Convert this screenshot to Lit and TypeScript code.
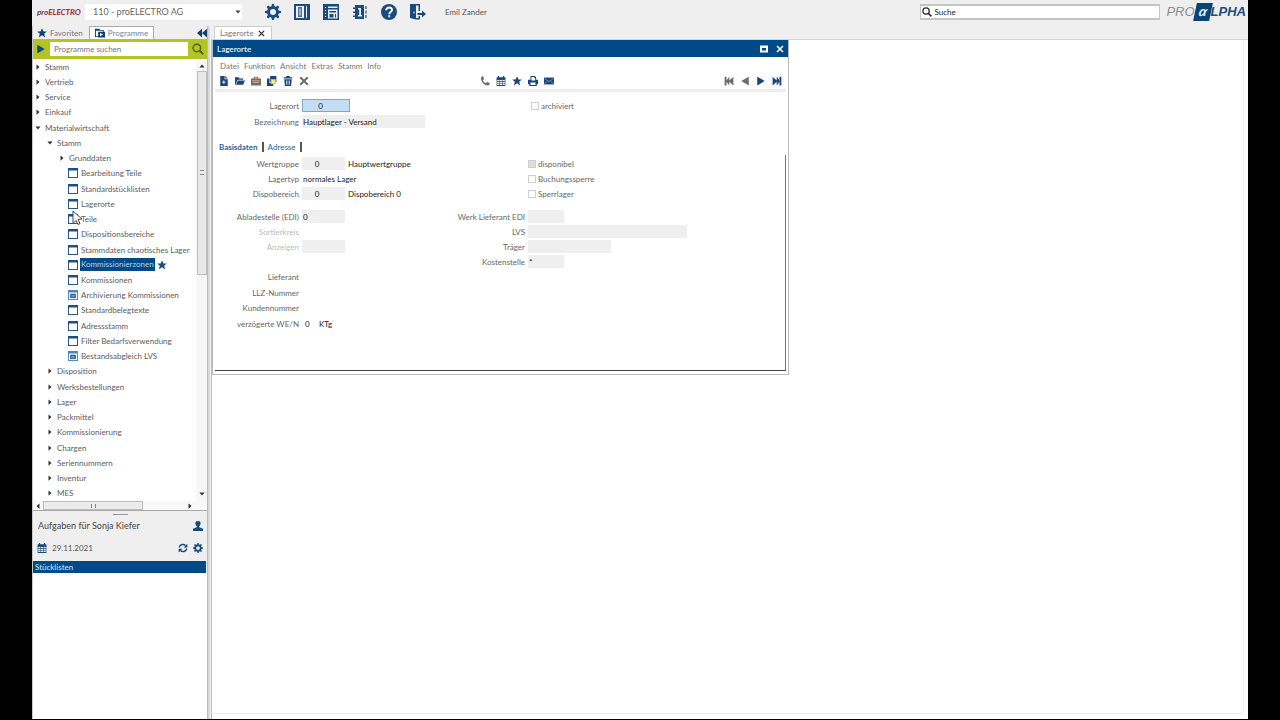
import { LitElement, html, css, svg, nothing } from "lit";
import { customElement, property } from "lit/decorators.js";

const icons: Record<string, unknown> = {
  gear: svg`<path fill-rule="evenodd" d="M7 0h2l.4 2.2 1.5.6L12.800 1.500l1.500 1.500-1.300 1.900.6 1.500L16 7v2l-2.300.5-.6 1.500 1.300 1.900-1.500 1.500-1.900-1.300-1.500.6L9 16H7l-.5-2.300-1.500-.6-1.900 1.300-1.500-1.500 1.300-1.900-.6-1.500L0 9V7l2.300-.5.6-1.500-1.300-1.900 1.500-1.500L5 2.800l1.500-.6zM8 5a3 3 0 100 6 3 3 0 000-6z"/>`,
  columns: svg`<path fill-rule="evenodd" d="M0 0h16v16H0zM2 2v12h8V2zM12 2v12h1V2z"/><path fill-rule="evenodd" d="M4 3h4v10H4zM5.500 4.500v7h1v-7z" opacity=".75"/>`,
  layout: svg`<path fill-rule="evenodd" d="M0 0h16v16H0zM2 3v1h1V3zM2 6v1h1V6zM2 9v1h1V9zM2 12v1h1v-1zM5 2.500V4h9.500V2.500zM5 5.500v9h9.500v-9z"/><path d="M6.500 7h6.500v1.500H6.500zM6.500 10h4v3.500h-4zM12 10h1v3.500h-1z"/>`,
  book: svg`<path fill-rule="evenodd" d="M3 1h9v14H3v-2H1v-1.500h2V9H1V7.500h2V5H1V3.500h2zM6 4v1.500h1.200V11H6v1.500h4V11H9V4z"/><path d="M13 2h2v3h-2zM13 6.500h2v3h-2zM13 11h2v3h-2z" opacity=".6"/>`,
  help: svg`<circle cx="8" cy="8" r="8"/><path d="M5.200 6.200C5.200 2.500 11 2.800 11 6c0 2-2.800 2-2.800 4.200M8.200 11.300v2" fill="none" stroke="#fff" stroke-width="1.900"/>`,
  exit: svg`<path fill-rule="evenodd" d="M0 0h10v7H8.500V1.500H6V14H8.500v-2H10v3.500H6L0 14zM3.500 7.500v2h1v-2z"/><path d="M7.500 9h4.500V6.500l4 3.500-4 3.500V11H7.500z"/>`,
  star: svg`<path d="M8 .5l2.300 5h5.400l-4.200 3.600L13 15l-5-3.300L3 15l1.500-5.900L.3 5.500h5.400z"/>`,
  programs: svg`<path fill-rule="evenodd" d="M0 1h7l1 2h6v3h-1.500V4.500h-11V13H6v1.500H0z"/><path fill-rule="evenodd" d="M5 6h11v9H5zM8 8v5l5-2.500z"/>`,
  collapse: svg`<path d="M8 1v14L0 8zM16 1v14L8 8z"/>`,
  play: svg`<path d="M2 1l12 7-12 7z"/>`,
  prev: svg`<path d="M14 1L2 8l12 7z"/>`,
  first: svg`<path d="M1 1h3v14H1zM15 1v14L8.500 9v6L3 8l5.500-7v6z"/>`,
  last: svg`<path d="M12 1h3v14h-3zM1 1v14l6.500-6v6L13 8 7.500 1v6z"/>`,
  search: svg`<circle cx="6.500" cy="6.500" r="5" fill="none" stroke="currentColor" stroke-width="2"/><path d="M10 10l5 5" stroke="currentColor" stroke-width="2.500"/>`,
  file: svg`<path fill-rule="evenodd" d="M2 0h7v5h5v11H2zM7 7v2H5v1.500h2v2h1.500v-2h2V9h-2V7z"/><path d="M10 0l4 4h-4z"/>`,
  folder: svg`<path d="M0 2h6l1 2h6v2H4L1.500 12 1 14H0z"/><path d="M4.500 7H16l-3 7H1.500z"/>`,
  save: svg`<path d="M0 4h4l1-3h6l1 3h4v11H0z" fill="#7c6b62"/><path d="M2 7h12v1.500H2zM3 10h10v1H3z" fill="#d4c2b4"/><path d="M6 2h4v3H6z" fill="#e0a070"/>`,
  copy: svg`<path d="M5 0h10v10H5zM0 4h4v7h6v5H0z"/><path d="M6 5h8v8H6z" fill="#d8cf35"/><path d="M8 7h4v4H8z" fill="#fff8a0"/>`,
  trash: svg`<path fill-rule="evenodd" d="M5 0h6v2h4v2H1V2h4zM2 5h12l-1 11H3zM5 7v7h1V7zM7.500 7v7h1V7zM10 7v7h1V7z"/>`,
  cross: svg`<path d="M2 2l12 12M14 2L2 14" fill="none" stroke="currentColor" stroke-width="3.200"/>`,
  phone: svg`<path d="M2 1l3-.5L6.500 5 4.500 6.500C5 9 7 11 9.500 11.500L11 9.500l4.500 1.500-.5 3.500C8 17 0 9 2 1z"/>`,
  calendar: svg`<path d="M1 2h2V0h2v2h6V0h2v2h2v4H1z"/><path fill-rule="evenodd" d="M1 5h14v11H1zM2 6.500v2h3.500v-2zM6.500 6.500v2h3v-2zM10.500 6.500v2H14v-2zM2 9.500v2h3.500v-2zM6.500 9.500v2h3v-2zM10.500 9.500v2H14v-2zM2 12.500v2h3.500v-2zM6.500 12.500v2h3v-2zM10.500 12.500v2H14v-2z"/>`,
  print: svg`<path fill-rule="evenodd" d="M4 0h7l2 2v4h3v7h-2v3H2v-3H0V6h4zM5.500 1.500V7h6V3H10V1.500zM4 10.500v4h8v-4z"/>`,
  mail: svg`<path d="M0 2.500h16v11H0z"/><path d="M1 4l7 5 7-5M1 12.500l4-4M15 12.500l-4-4" fill="none" stroke="#9db8d0"/>`,
  person: svg`<path d="M8 0c6 0 4.500 6 2 8.500v1.500l6 2.500V16H0v-3.500L6 10V8.500C3.500 6 2 0 8 0z"/>`,
  sync: svg`<path d="M2 7C3 2 9 1 12 4M14 9c-1 5-7 6-10 3" fill="none" stroke="currentColor" stroke-width="2.400"/><path d="M15 1v6H9zM1 15V9h6z"/>`,
  form: svg`<path d="M0 0h16v16H0z"/><path d="M1.500 4h13v10.500h-13z" fill="#fff"/>`,
  report: svg`<path d="M0 0h16v16H0z" fill="#4b86b8"/><path d="M1.500 4h13v10.500h-13z" fill="#fff"/><path d="M3.500 6h9v7h-9z"/><path d="M5 8.500h6M5 11h6" stroke="#cfe0ee"/>`,
  right: svg`<path d="M4 1l8 7-8 7z"/>`,
  down: svg`<path d="M1 4h14l-7 8z"/>`,
  up: svg`<path d="M1 12h14L8 4z"/>`,
  left: svg`<path d="M12 1L4 8l8 7z"/>`,
  max: svg`<path fill-rule="evenodd" d="M0 1h16v14H0zM4 6v5h8V6z"/>`,
};

const icon = (name: string, cls = "i10") =>
  html`<svg class="icon ${cls}" viewBox="0 0 16 16" aria-hidden="true">${icons[name]}</svg>`;

const shared = css`
  * { box-sizing: border-box; }
  button, input, select {
    font: inherit; color: inherit; border: 0; padding: 0; margin: 0;
    background: none; border-radius: 0; outline: 0; min-width: 0;
  }
  button { display: flex; align-items: center; }
  .icon { display: block; flex: none; fill: currentColor; width: 10px; height: 10px; }
  .i6 { width: 6px; height: 6px; }
  .i8 { width: 8px; height: 8px; }
  .i12 { width: 12px; height: 12px; }
  .i16 { width: 16px; height: 16px; }
`;

type Node = { level: number; kind: string; label: string; selected?: boolean; pointer?: boolean };
const n = (level: number, kind: string, label: string, extra = {}): Node => ({ level, kind, label, ...extra });
const nodes: Node[] = [
  n(0, "right", "Stamm"),
  n(0, "right", "Vertrieb"),
  n(0, "right", "Service"),
  n(0, "right", "Einkauf"),
  n(0, "down", "Materialwirtschaft"),
  n(1, "down", "Stamm"),
  n(2, "right", "Grunddaten"),
  n(3, "form", "Bearbeitung Teile"),
  n(3, "form", "Standardstücklisten"),
  n(3, "form", "Lagerorte"),
  n(3, "form", "Teile", { pointer: true }),
  n(3, "form", "Dispositionsbereiche"),
  n(3, "form", "Stammdaten chaotisches Lager"),
  n(3, "form", "Kommissionierzonen", { selected: true }),
  n(3, "form", "Kommissionen"),
  n(3, "report", "Archivierung Kommissionen"),
  n(3, "form", "Standardbelegtexte"),
  n(3, "form", "Adressstamm"),
  n(3, "form", "Filter Bedarfsverwendung"),
  n(3, "report", "Bestandsabgleich LVS"),
  n(1, "right", "Disposition"),
  n(1, "right", "Werksbestellungen"),
  n(1, "right", "Lager"),
  n(1, "right", "Packmittel"),
  n(1, "right", "Kommissionierung"),
  n(1, "right", "Chargen"),
  n(1, "right", "Seriennummern"),
  n(1, "right", "Inventur"),
  n(1, "right", "MES"),
];

@customElement("program-tree")
export class ProgramTree extends LitElement {
  static styles = [shared, css`
    :host { display: grid; grid-template-columns: minmax(0, 1fr) 11px; min-height: 0; background: #fff; color: #5c5c5c; }
    ul { list-style: none; margin: 0; padding: 0 0 0 2px; display: grid; grid-auto-rows: 1fr; min-height: 0; }
    li { display: flex; align-items: center; position: relative; min-height: 0; }
    .l1 { padding-left: 12px; }
    .l2 { padding-left: 24px; }
    .l3 { padding-left: 33px; }
    a { display: flex; align-items: center; color: inherit; text-decoration: none; white-space: nowrap; gap: 3px; line-height: 12px; }
    a .icon { color: #333; }
    .l3 .icon { color: #1d4f82; }
    .l3 a { gap: 2px; }
    .text { padding: 0 1px; }
    .selected .text { background: #004b87; color: #b9d0e6; line-height: 13px; }
    .selected > .icon { margin-left: 2px; }
    .pointer { position: absolute; left: 35px; top: 0; width: 14px; height: 14px; }
    .bar { display: flex; flex-direction: column; align-items: center; background: #f6f6f6; color: #333; padding: 4px 0; }
    .thumb { width: 10px; height: 47%; margin-top: 2px; background: #e9e9ec; border: 1px solid #bdbdbd; display: flex; align-items: center; justify-content: center; }
    .grip { width: 4px; height: 5px; border-top: 1px solid #888; border-bottom: 1px solid #888; }
    .fill { flex: 1; }
  `];
  render() {
    return html`
      <ul>
        ${nodes.map((d) => html`
          <li class="l${d.level} ${d.selected ? "selected" : ""}">
            <a href="#">${icon(d.kind, d.level === 3 ? "i10" : "i6")}<span class="text">${d.label}</span></a>
            ${d.selected ? icon("star") : nothing}
            ${d.pointer ? html`<svg class="pointer" viewBox="0 0 14 14" aria-hidden="true"><path d="M3 0l9 8-4 .5 2 4-2 1-2-4-3 3z" fill="#fff" stroke="#445" /></svg>` : nothing}
          </li>`)}
      </ul>
      <div class="bar">${icon("up", "i6")}<div class="thumb"><i class="grip"></i></div><div class="fill"></div>${icon("down", "i6")}</div>
    `;
  }
}

@customElement("side-panel")
export class SidePanel extends LitElement {
  static styles = [shared, css`
    :host { display: flex; flex-direction: column; min-height: 0; background: #efefef; border-left: 1px solid #c8c8c8; }
    .tabs { display: flex; align-items: stretch; height: 13px; color: #777; }
    .tab { gap: 3px; padding: 0 6px 0 4px; }
    .tab.on { background: #fff; border: 1px solid #aaa; border-bottom: 0; color: #6f86a5; padding: 0 5px; }
    .tabs .icon { color: #103f70; }
    .collapse { margin-left: auto; }
    .find { display: flex; align-items: center; gap: 4px; height: 20px; padding: 0 3px; background: #b4c424; color: #0b4a86; }
    .find input { flex: 1; height: 14px; background: #fff; color: #555; padding: 0 4px; }
    .find input::placeholder { color: #777; opacity: 1; }
    .find .lens { color: #50601c; }
    program-tree { flex: 442 1 0; }
    .hbar { display: flex; align-items: center; height: 10px; background: #f8f8f8; color: #333; padding: 0 14px 0 2px; border-bottom: 1px solid #aaa; }
    .hthumb { width: 100px; height: 9px; margin-left: 2px; margin-right: auto; background: #ececec; border: 1px solid #bbb; display: flex; align-items: center; justify-content: center; }
    .grip { width: 5px; height: 4px; border-left: 1px solid #888; border-right: 1px solid #888; }
    .handle { width: 15px; height: 4px; border-bottom: 1px solid #999; margin: 0 auto; }
    .line { display: flex; align-items: center; height: 22px; padding: 0 4px; color: #1b4a7a; gap: 5px; }
    h2 { margin: 0 auto 0 1px; font-size: 9px; font-weight: 400; color: #444; }
    .date { margin-right: auto; color: #555; }
    .head { margin: 2px 1px 0 0; background: #004b87; color: #dbe7f2; height: 12px; line-height: 12px; padding-left: 2px; }
    .list { flex: 146 1 0; background: #fff; }
  `];
  render() {
    return html`
      <div class="tabs">
        <button class="tab">${icon("star")}Favoriten</button>
        <button class="tab on">${icon("programs")}Programme</button>
        <button class="collapse" aria-label="Einklappen">${icon("collapse")}</button>
      </div>
      <div class="find">
        ${icon("play")}
        <input aria-label="Programme suchen" placeholder="Programme suchen" />
        <button class="lens" aria-label="Suchen">${icon("search", "i12")}</button>
      </div>
      <program-tree></program-tree>
      <div class="hbar">${icon("left", "i6")}<div class="hthumb"><i class="grip"></i></div>${icon("right", "i6")}</div>
      <div class="handle"></div>
      <div class="line"><h2>Aufgaben für Sonja Kiefer</h2>${icon("person")}</div>
      <div class="line">${icon("calendar")}<span class="date">29.11.2021</span>${icon("sync")}${icon("gear")}</div>
      <div class="head">Stücklisten</div>
      <div class="list"></div>
    `;
  }
}

@customElement("lager-window")
export class LagerWindow extends LitElement {
  @property() heading = "Lagerorte";
  static styles = [shared, css`
    :host { display: block; background: #fff; border: 1px solid #bbb; border-top: 0; padding-bottom: 3px; color: #666; }
    .title { display: flex; align-items: center; gap: 8px; height: 17px; padding: 0 4px; background: #004b87; color: #fff; }
    h1 { margin: 0 auto 0 0; font-size: 8px; font-weight: 700; color: #dce8f4; }
    .menu { display: flex; gap: 5px; padding: 1px 7px 0; height: 16px; align-items: center; color: #777; }
    .tools { display: flex; gap: 6px; height: 15px; align-items: center; padding: 0 6px; color: #1b4478; }
    .gap { flex: 160; }
    .gap2 { flex: 159; }
    .grey { color: #6b6b6b; }
    form { border-top: 3px solid #ededf0; margin: 1px 2px 0; padding-top: 6px; border-bottom: 1px solid #444; }
    .row { display: grid; grid-template-columns: 84px 135px 85px 1fr; column-gap: 3px; height: 15px; align-items: center; white-space: nowrap; }
    .row > label { text-align: right; }
    .row > .off { color: #bbb; }
    .field { display: flex; align-items: center; height: 15px; gap: 3px; color: #222; }
    .field input { background: #efefef; height: 13px; padding: 0 1px; }
    .field .mid { text-align: center; padding-right: 14px; }
    .field .key { width: 48px; background: #c3def2; border: 1px solid #7fa6c6; text-align: center; padding-right: 12px; }
    .w43 { width: 43px; }
    .w36 { width: 36px; }
    .w83 { width: 83px; }
    .w123 { width: 123px; }
    .w159 { width: 159px; }
    .field .plain { background: none; width: 14px; padding-left: 3px; }
    .field .wide { background: none; width: 60px; }
    .row > .box { display: flex; align-items: center; gap: 2px; grid-column: 4; }
    .row > .shift { padding-left: 3px; }
    .box input { appearance: none; width: 8px; height: 8px; border: 1px solid #d0d0d0; background: #fff; }
    .box .set { background: #ddd; }
    .tabs { display: flex; align-items: center; height: 16px; margin-top: 10px; padding-left: 4px; color: #1f6497; }
    .tabs button { padding-right: 4px; border-right: 2px solid #555; line-height: 10px; margin-right: 4px; }
    .tabs .on { font-weight: 700; }
    .pane { border-right: 1px solid #777; padding: 1px 0 39px; }
    .group { margin-bottom: 8px; }
    .s1 { margin-bottom: 1px; }
  `];
  private tool = (name: string, label: string, cls = "") =>
    html`<button class=${cls} type="button" aria-label=${label}>${icon(name)}</button>`;
  render() {
    return html`
      <div class="title"><h1>${this.heading}</h1>
        <button aria-label="Maximieren">${icon("max", "i8")}</button>
        <button aria-label="Schließen">${icon("cross", "i8")}</button></div>
      <nav class="menu">${["Datei", "Funktion", "Ansicht", "Extras", "Stamm", "Info"].map((m) => html`<button>${m}</button>`)}</nav>
      <div class="tools">
        ${this.tool("file", "Neu")}${this.tool("folder", "Öffnen")}${this.tool("save", "Speichern")}
        ${this.tool("copy", "Kopieren")}${this.tool("trash", "Löschen")}${this.tool("cross", "Abbrechen", "grey")}
        <span class="gap"></span>
        ${this.tool("phone", "Telefon", "grey")}${this.tool("calendar", "Kalender")}${this.tool("star", "Favorit")}
        ${this.tool("print", "Drucken")}${this.tool("mail", "E-Mail")}
        <span class="gap2"></span>
        ${this.tool("first", "Erster", "grey")}${this.tool("prev", "Voriger", "grey")}${this.tool("play", "Nächster")}${this.tool("last", "Letzter")}
      </div>
      <form>
        <div class="row s1">
          <label for="ort">Lagerort</label><div class="field"><input id="ort" class="key" value="0" /></div>
          <label class="box shift"><input type="checkbox" disabled />archiviert</label>
        </div>
        <div class="row"><label for="bez">Bezeichnung</label><div class="field"><input id="bez" class="w123" value="Hauptlager - Versand" /></div></div>
        <div class="tabs"><button type="button" class="on">Basisdaten</button><button type="button">Adresse</button></div>
        <div class="pane">
          <div class="group">
            <div class="row"><label for="wg">Wertgruppe</label><div class="field"><input id="wg" class="w43 mid" value="0" /><span>Hauptwertgruppe</span></div>
              <label class="box"><input type="checkbox" class="set" disabled />disponibel</label></div>
            <div class="row"><label for="typ">Lagertyp</label><div class="field"><input id="typ" class="wide" value="normales Lager" /></div>
              <label class="box"><input type="checkbox" />Buchungssperre</label></div>
            <div class="row"><label for="db">Dispobereich</label><div class="field"><input id="db" class="w43 mid" value="0" /><span>Dispobereich 0</span></div>
              <label class="box"><input type="checkbox" />Sperrlager</label></div>
          </div>
          <div class="row"><label for="edi">Abladestelle (EDI)</label><div class="field"><input id="edi" class="w43" value="0" /></div>
            <label for="wl">Werk Lieferant EDI</label><div class="field"><input id="wl" class="w36" /></div></div>
          <div class="row"><label class="off">Sortierkreis</label><span></span>
            <label for="lvs">LVS</label><div class="field"><input id="lvs" class="w159" /></div></div>
          <div class="row"><label class="off" for="anl">Anzeigen</label><div class="field"><input id="anl" class="w43" disabled /></div>
            <label for="tr">Träger</label><div class="field"><input id="tr" class="w83" /></div></div>
          <div class="row"><span></span><span></span><label for="ks">Kostenstelle</label><div class="field"><input id="ks" class="w36" value="*" /></div></div>
          <div class="row s1"><label>Lieferant</label></div>
          <div class="row"><label>LLZ-Nummer</label></div>
          <div class="row s1"><label>Kundennummer</label></div>
          <div class="row"><label for="we">verzögerte WE/N</label><div class="field"><input id="we" class="plain" value="0" /><span>KTg</span></div></div>
        </div>
      </form>
    `;
  }
}

@customElement("app-root")
export class AppRoot extends LitElement {
  static styles = [shared, css`
    :host { display: block; height: 100vh; box-sizing: border-box; background: #000; padding: 0 32px 1px; font: 8px/10px Lato, "Open Sans", sans-serif; }
    .shell { height: 100%; background: #efefef; display: grid; grid-template-rows: 26px minmax(0, 1fr); }
    header { display: flex; align-items: center; padding: 0 2px 3px 5px; }
    .brand { font-size: 8px; font-weight: 700; font-style: italic; color: #6b3a4c; width: 48px; }
    .brand b { color: #a8323c; }
    .company { display: flex; align-items: center; background: #fff; height: 16px; width: 157px; padding-right: 1px; color: #444; }
    .company select { appearance: none; flex: 1; height: 16px; padding-left: 8px; font-size: 9px; color: #666; }
    .actions { display: flex; gap: 13px; margin: 0 19px 0 23px; color: #1b4a80; }
    .user { color: #555; margin-right: auto; }
    .global { display: flex; align-items: center; gap: 2px; width: 240px; height: 16px; background: #fff; border: 1px solid #c4c4c4; border-width: 2px 1px; padding-left: 1px; color: #222; margin-right: 6px; }
    .global input { flex: 1; }
    .logo { display: flex; align-items: center; font: italic 13px/18px "Liberation Sans", sans-serif; color: #8b8f96; }
    .logo .alpha { width: 16px; height: 18px; background: #0b4377; color: #dce9f5; transform: skewX(-12deg); text-align: center; font-weight: 700; }
    .logo .rest { color: #1d4d80; font-weight: 700; }
    .body { display: grid; grid-template-columns: 175px 4px 1fr; min-height: 0; }
    .split { background: #d9d9d9; border-left: 1px solid #bbb; border-right: 1px solid #f4f4f4; }
    main { display: flex; flex-direction: column; min-width: 0; }
    .docs { height: 14px; display: flex; border-bottom: 1px solid #c9d3d8; }
    .doc { background: #fff; border: 1px solid #ccc; border-width: 1px 1px 0; padding: 0 6px 0 5px; margin-left: 3px; gap: 4px; color: #777; }
    .doc .icon { color: #333; width: 7px; height: 7px; }
    .desk { flex: 1; background: #fff; border-left: 1px solid #bbb; display: flex; flex-direction: column; padding-right: 4px; }
    .area { flex: 1; border: 1px solid #f0f0f0; border-width: 0 1px 1px 0; }
    .status { height: 5px; }
    lager-window { width: min(577px, 100%); }
  `];
  render() {
    return html`
      <div class="shell">
        <header>
          <span class="brand">pro<b>ELECTRO</b></span>
          <div class="company">
            <select aria-label="Firma"><option>110 - proELECTRO AG</option></select>${icon("down", "i6")}
          </div>
          <div class="actions">
            ${[["gear", "Einstellungen"], ["columns", "Spalten"], ["layout", "Ansicht"], ["book", "Info"], ["help", "Hilfe"], ["exit", "Abmelden"]]
              .map(([i, l]) => html`<button aria-label=${l}>${icon(i, "i16")}</button>`)}
          </div>
          <span class="user">Emil Zander</span>
          <label class="global">${icon("search")}<input aria-label="Suche" value="Suche" /></label>
          <div class="logo">PRO<span class="alpha">α</span><span class="rest">LPHA</span></div>
        </header>
        <div class="body">
          <side-panel></side-panel>
          <div class="split"></div>
          <main>
            <div class="docs"><button class="doc">Lagerorte ${icon("cross")}</button></div>
            <div class="desk"><div class="area"><lager-window></lager-window></div><div class="status"></div></div>
          </main>
        </div>
      </div>
    `;
  }
}
